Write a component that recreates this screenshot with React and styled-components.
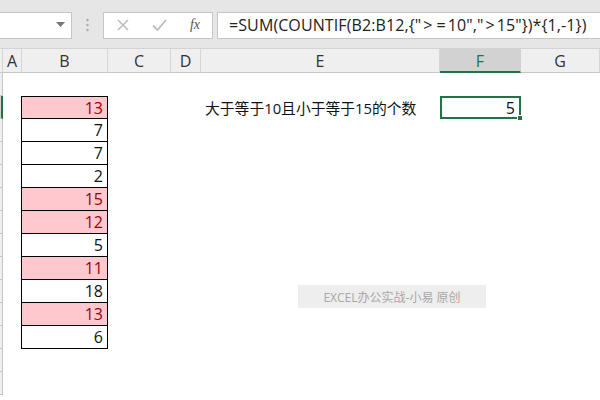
import React from "react";
import styled, { createGlobalStyle } from "styled-components";

const Global = createGlobalStyle`
  html, body { margin: 0; padding: 0; background: #fff; }
  * { box-sizing: border-box; }
`;

const FONT = `"Open Sans", "Noto Sans CJK SC", sans-serif`;

const Root = styled.div`
  width: 600px;
  height: 400px;
  overflow: hidden;
  position: relative;
  font-family: ${FONT};
  background: #fff;
`;

const Toolbar = styled.div`
  height: 49px;
  background: #e6e6e6;
  display: flex;
  align-items: center;
  padding-top: 2px;
  border-bottom: 1px solid #d4d4d4;
`;

const Box = styled.div`
  height: 27px;
  background: #fff;
  border: 1px solid #c6c6c6;
  display: flex;
  align-items: center;
`;

const NameBox = styled(Box)`
  width: 73px;
  margin-left: -1px;
  justify-content: flex-end;
  padding-right: 6px;
`;

const Dots = styled.div`
  width: 31px;
  display: flex;
  justify-content: center;
`;

const FuncBox = styled(Box)`
  width: 110px;
  justify-content: space-between;
  padding: 0 12px 0 13px;
`;

const FormulaBox = styled(Box)`
  flex: 1;
  margin-left: 4px;
  margin-right: -2px;
  padding-left: 11px;
  font-size: 16px;
  color: #222;
  white-space: nowrap;
  letter-spacing: 0.1px;
`;

const Op = styled.span`
  margin: 0 2px;
`;

const Fx = styled.span`
  font-family: "Liberation Serif", serif;
  font-style: italic;
  font-size: 14px;
  color: #555;
`;

const Sheet = styled.div`
  display: grid;
  grid-template-columns: 3px 19px 86px 63px 30px 239px 81px 1fr;
  grid-template-rows: 24px repeat(14, 23px);
`;

const ColHead = styled.div`
  background: ${(p) => (p.$sel ? "#d2d2d2" : "#efefef")};
  border-right: 1px solid ${(p) => (p.$sel ? "#d2d2d2" : "#d6d6d6")};
  border-bottom: ${(p) => (p.$sel ? "2px solid #217346" : "1px solid #c6c6c6")};
  color: ${(p) => (p.$sel ? "#217346" : "#333")};
  font-size: 16px;
  display: flex;
  align-items: center;
  justify-content: center;
  padding-top: 1px;
`;

const RowHead = styled.div`
  background: ${(p) => (p.$sel ? "#d2d2d2" : "#efefef")};
  border-right: ${(p) => (p.$sel ? "2px solid #217346" : "1px solid #c6c6c6")};
  border-bottom: 1px solid #c6c6c6;
`;

const Cell = styled.div`
  display: flex;
  align-items: center;
  justify-content: ${(p) => (p.$right ? "flex-end" : "flex-start")};
  padding: 0 3px;
  font-size: 16px;
  color: #111;
  white-space: nowrap;
  position: relative;
`;

const DataCell = styled(Cell)`
  margin-left: -1px;
  border: 1px solid #000;
  border-top: ${(p) => (p.$first ? "1px solid #000" : "none")};
  background: ${(p) => (p.$hl ? "#ffc7ce" : "#fff")};
  color: ${(p) => (p.$hl ? "#9c0006" : "#111")};
  padding-right: 4px;
`;

const LabelCell = styled(Cell)`
  font-size: 14.8px;
  padding-left: 4px;
`;

const ActiveCell = styled(Cell)`
  border: 2px solid #217346;
  padding-right: 4px;
`;

const Handle = styled.span`
  position: absolute;
  right: -4px;
  bottom: -4px;
  width: 6px;
  height: 6px;
  background: #217346;
  border: 1px solid #fff;
`;

const Watermark = styled.div`
  position: absolute;
  left: 298px;
  top: 285px;
  width: 188px;
  height: 23px;
  background: #eeeeee;
  color: #a8a8a8;
  font-size: 12px;
  display: flex;
  align-items: center;
  justify-content: center;
  font-family: ${FONT};
`;

const cols = ["A", "B", "C", "D", "E", "F", "G"];
const data = [
  [13, true], [7, false], [7, false], [2, false], [15, true], [12, true],
  [5, false], [11, true], [18, false], [13, true], [6, false],
];

export default function App() {
  const rows = [];
  for (let r = 1; r <= 14; r++) {
    rows.push(<RowHead key={`rh${r}`} $sel={r === 2} />);
    rows.push(<Cell key={`a${r}`} />);
    const d = data[r - 2];
    if (d) {
      rows.push(
        <DataCell key={`b${r}`} $right $hl={d[1]} $first={r === 2}>
          {d[0]}
        </DataCell>
      );
    } else {
      rows.push(<Cell key={`b${r}`} />);
    }
    rows.push(<Cell key={`c${r}`} />);
    rows.push(<Cell key={`d${r}`} />);
    if (r === 2) {
      rows.push(<LabelCell key={`e${r}`}>大于等于10且小于等于15的个数</LabelCell>);
      rows.push(
        <ActiveCell key={`f${r}`} $right>
          5<Handle />
        </ActiveCell>
      );
    } else {
      rows.push(<Cell key={`e${r}`} />);
      rows.push(<Cell key={`f${r}`} />);
    }
    rows.push(<Cell key={`g${r}`} />);
  }
  return (
    <Root>
      <Global />
      <Toolbar>
        <NameBox>
          <svg width="9" height="6" viewBox="0 0 9 6">
            <path d="M0 0 L9 0 L4.5 5 Z" fill="#777" />
          </svg>
        </NameBox>
        <Dots>
          <svg width="3" height="14" viewBox="0 0 3 14">
            <circle cx="1.5" cy="2" r="1.2" fill="#aaa" />
            <circle cx="1.5" cy="7" r="1.2" fill="#aaa" />
            <circle cx="1.5" cy="12" r="1.2" fill="#aaa" />
          </svg>
        </Dots>
        <FuncBox>
          <svg width="12" height="12" viewBox="0 0 12 12">
            <path d="M1 1 L11 11 M11 1 L1 11" stroke="#bdbdbd" strokeWidth="1.6" />
          </svg>
          <svg width="15" height="12" viewBox="0 0 15 12">
            <path d="M1 6.5 L5.5 11 L14 1" stroke="#bdbdbd" strokeWidth="1.8" fill="none" />
          </svg>
          <Fx>fx</Fx>
        </FuncBox>
        <FormulaBox>
          {'=SUM(COUNTIF(B2:B12,{"'}
          <Op>&gt;</Op>
          <Op>=</Op>
          {'10","'}
          <Op>&gt;</Op>
          {'15"})*{1,-1})'}
        </FormulaBox>
      </Toolbar>
      <Sheet>
        <ColHead />
        {cols.map((c) => (
          <ColHead key={c} $sel={c === "F"}>
            {c}
          </ColHead>
        ))}
        {rows}
      </Sheet>
      <Watermark>EXCEL办公实战-小易 原创</Watermark>
    </Root>
  );
}
